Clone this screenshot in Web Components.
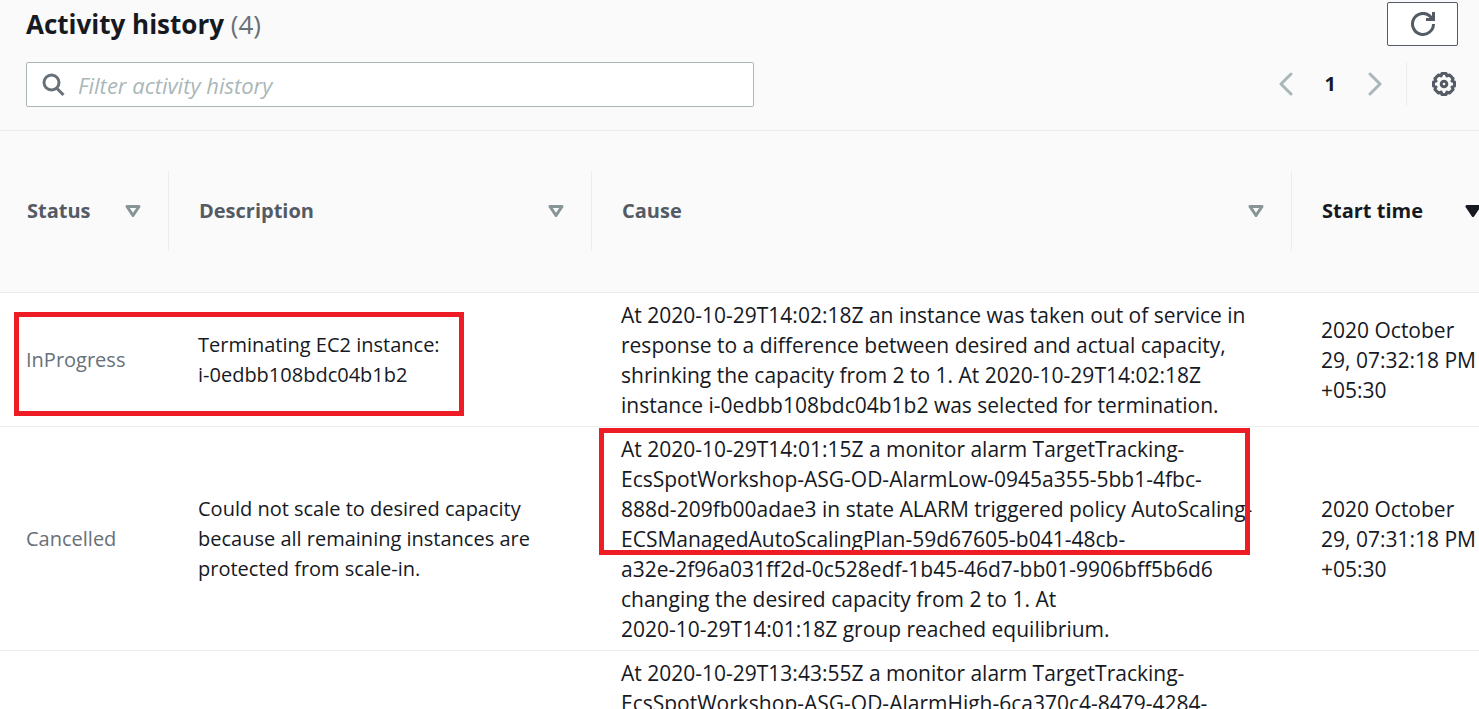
<!DOCTYPE html>
<html lang="en">
<head>
<meta charset="utf-8">
<title>Activity history</title>
<style>
  html, body { height: 100%; margin: 0; }
  body { overflow: hidden; background: #fff; color: #16191f; font: 20px/30px "Open Sans", "Noto Sans", sans-serif; }
</style>
</head>
<body>
<activity-history>
  <panel-toolbar slot="header" heading="Activity history" count="4"></panel-toolbar>
  <activity-table></activity-table>
</activity-history>

<script>
const icons = {
  search: '<svg width="24" height="24" viewBox="0 0 24 24" fill="none" stroke="#687078" stroke-width="3"><circle cx="9.500" cy="9.500" r="7.500"/><path d="M15 15.500 21.500 22"/></svg>',
  refresh: '<svg width="24" height="24" viewBox="0 0 24 24" fill="none" stroke="#545b64" stroke-width="3"><path d="M22.500 12A10.500 10.500 0 1 1 18.500 3.700L21.500 7M22.500 0V7.500H15"/></svg>',
  prev: '<svg width="14" height="24" viewBox="0 0 14 24" fill="none" stroke="#aab7b8" stroke-width="3" stroke-linecap="round" stroke-linejoin="round"><path d="M12 2 2 12 12 22"/></svg>',
  next: '<svg width="14" height="24" viewBox="0 0 14 24" fill="none" stroke="#aab7b8" stroke-width="3" stroke-linecap="round" stroke-linejoin="round"><path d="M2 2 12 12 2 22"/></svg>',
  gear: '<svg width="24" height="24" viewBox="0 0 24 24" fill="none" stroke="#545b64" stroke-width="3" stroke-linejoin="round"><path d="M9.900 1.500H14.100L14.900 4 17.400 2.900 21.100 6.600 20 9.100 22.500 9.900V14.100L20 14.900 21.100 17.400 17.400 21.100 14.900 20 14.100 22.500H9.900L9.100 20 6.600 21.100 2.900 17.400 4 14.900 1.500 14.100V9.900L4 9.100 2.900 6.600 6.600 2.900 9.100 4Z"/><circle cx="12" cy="12" r="2.800"/></svg>'
};

class ActivityHistory extends HTMLElement {
  constructor() {
    super();
    this.attachShadow({ mode: 'open' }).innerHTML = `
      <style>
        :host { display: block; height: 100vh; overflow: auto; scrollbar-width: none; }
      </style>
      <slot name="header"></slot>
      <slot></slot>`;
  }
}

class IconButton extends HTMLElement {
  connectedCallback() {
    if (this.shadowRoot) return;
    this.attachShadow({ mode: 'open' }).innerHTML = `
      <style>
        :host { display: inline-flex; }
        button { display: flex; align-items: center; justify-content: center; margin: 0; padding: 0; border: 0; background: none; cursor: pointer; }
        :host([outlined]) button { width: 71px; height: 44px; border: 1px solid #545b64; border-radius: 2px; background: #fff; }
        svg { display: block; }
      </style>
      <button type="button" aria-label="${this.getAttribute('label')}">${icons[this.getAttribute('icon')]}</button>`;
  }
}

class PanelToolbar extends HTMLElement {
  connectedCallback() {
    if (this.shadowRoot) return;
    this.attachShadow({ mode: 'open' }).innerHTML = `
      <style>
        :host { display: block; padding: 2px 21px 23px 26px; background: #fafafa; border-bottom: 1px solid #eaeded; }
        .row { display: flex; justify-content: space-between; align-items: flex-start; }
        h2 { margin: 0; font-size: 26px; line-height: 44px; font-weight: 700; }
        h2 span { font-weight: 400; color: #687078; }
        .tools { margin-top: 16px; }
        .filter { box-sizing: border-box; display: flex; align-items: center; gap: 12px; flex: 0 1 728px; height: 45px; padding: 0 15px; border: 1px solid #aab7b8; border-radius: 2px; background: #fff; }
        .filter svg { display: block; flex: none; }
        input { flex: 1; min-width: 0; margin: 0; padding: 0; border: 0; outline: 0; background: none; color: #16191f; font: inherit; font-size: 22px; }
        input::placeholder { color: #aab7b8; font-style: italic; opacity: 1; }
        nav { display: flex; align-items: center; }
        nav strong { padding: 0 32px; font-size: 20px; }
        .rule { width: 1px; height: 44px; margin: 0 25px 0 24px; background: #eaeded; }
        .gear { margin-right: 2px; }
      </style>
      <div class="row">
        <h2>${this.getAttribute('heading')} <span>(${this.getAttribute('count')})</span></h2>
        <icon-button outlined icon="refresh" label="Refresh"></icon-button>
      </div>
      <div class="row tools">
        <label class="filter">${icons.search}<input type="text" aria-label="Filter activity history" placeholder="Filter activity history"></label>
        <nav aria-label="Pages">
          <icon-button icon="prev" label="Previous page"></icon-button>
          <strong>1</strong>
          <icon-button icon="next" label="Next page"></icon-button>
          <span class="rule"></span>
          <icon-button class="gear" icon="gear" label="Preferences"></icon-button>
        </nav>
      </div>`;
  }
}

class SortHeader extends HTMLElement {
  constructor() {
    super();
    this.attachShadow({ mode: 'open' }).innerHTML = `
      <style>
        :host { display: flex; align-items: center; box-sizing: border-box; height: 80px; padding: 0 27px; border-right: 1px solid #eaeded; color: #545b64; }
        :host([active]) { color: #16191f; border-right-color: transparent; }
        button { display: flex; align-items: center; justify-content: space-between; width: 100%; margin: 0; padding: 0; border: 0; background: none; color: inherit; font: inherit; cursor: pointer; }
        svg { display: block; fill: none; stroke: #879596; stroke-width: 3; stroke-linejoin: round; }
        :host([active]) svg { fill: #16191f; stroke: #16191f; }
      </style>
      <button type="button"><slot></slot><svg width="16" height="12" viewBox="0 0 16 12"><path d="M2 1.500H14L8 10.500Z"/></svg></button>`;
  }
}

class ActivityTable extends HTMLElement {
  constructor() {
    super();
    this.attachShadow({ mode: 'open' }).innerHTML = `
      <style>
        :host { display: block; overflow: auto; scrollbar-width: none; }
        table { width: 100%; min-width: 1509px; table-layout: fixed; border-collapse: separate; border-spacing: 0; }
        .status { width: 169px; } .description { width: 423px; } .start { width: 217px; }
        th { box-sizing: border-box; height: 162px; padding: 40px 0; background: #fafafa; border-bottom: 1px solid #eaeded; text-align: left; vertical-align: top; }
        th + th sort-header { padding-left: 30px; }
        td { position: relative; padding: 7px 0 6px 29px; border-bottom: 1px solid #eaeded; vertical-align: middle; white-space: nowrap; }
        td:first-child { padding-left: 26px; color: #687078; }
        td:nth-child(n + 3) { font-size: 21px; }
        mark { position: absolute; z-index: 1; box-sizing: border-box; border: 5px solid #ee1c25; background: none; pointer-events: none; }
        .instance { left: 14px; top: 19px; width: 450px; height: 104px; }
        .alarm { left: 7px; top: 1px; width: 651px; height: 127px; }
      </style>
      <table>
        <colgroup><col class="status"><col class="description"><col><col class="start"></colgroup>
        <thead>
          <tr>
            <th scope="col"><sort-header>Status</sort-header></th>
            <th scope="col"><sort-header>Description</sort-header></th>
            <th scope="col"><sort-header>Cause</sort-header></th>
            <th scope="col" aria-sort="descending"><sort-header active>Start time</sort-header></th>
          </tr>
        </thead>
        <tbody>
          <tr>
            <td>InProgress<mark class="instance"></mark></td>
            <td>Terminating EC2 instance:<br>i-0edbb108bdc04b1b2</td>
            <td>At 2020-10-29T14:02:18Z an instance was taken out of service in<br>response to a difference between desired and actual capacity,<br>shrinking the capacity from 2 to 1. At 2020-10-29T14:02:18Z<br>instance i-0edbb108bdc04b1b2 was selected for termination.</td>
            <td>2020 October<br>29, 07:32:18 PM<br>+05:30</td>
          </tr>
          <tr>
            <td>Cancelled</td>
            <td>Could not scale to desired capacity<br>because all remaining instances are<br>protected from scale-in.</td>
            <td>At 2020-10-29T14:01:15Z a monitor alarm TargetTracking-<br>EcsSpotWorkshop-ASG-OD-AlarmLow-0945a355-5bb1-4fbc-<br>888d-209fb00adae3 in state ALARM triggered policy AutoScaling-<br>ECSManagedAutoScalingPlan-59d67605-b041-48cb-<br>a32e-2f96a031ff2d-0c528edf-1b45-46d7-bb01-9906bff5b6d6<br>changing the desired capacity from 2 to 1. At<br>2020-10-29T14:01:18Z group reached equilibrium.<mark class="alarm"></mark></td>
            <td>2020 October<br>29, 07:31:18 PM<br>+05:30</td>
          </tr>
          <tr>
            <td></td>
            <td></td>
            <td>At 2020-10-29T13:43:55Z a monitor alarm TargetTracking-<br>EcsSpotWorkshop-ASG-OD-AlarmHigh-6ca370c4-8479-4284-</td>
            <td></td>
          </tr>
        </tbody>
      </table>`;
  }
}

customElements.define('icon-button', IconButton);
customElements.define('sort-header', SortHeader);
customElements.define('panel-toolbar', PanelToolbar);
customElements.define('activity-table', ActivityTable);
customElements.define('activity-history', ActivityHistory);
</script>
</body>
</html>
